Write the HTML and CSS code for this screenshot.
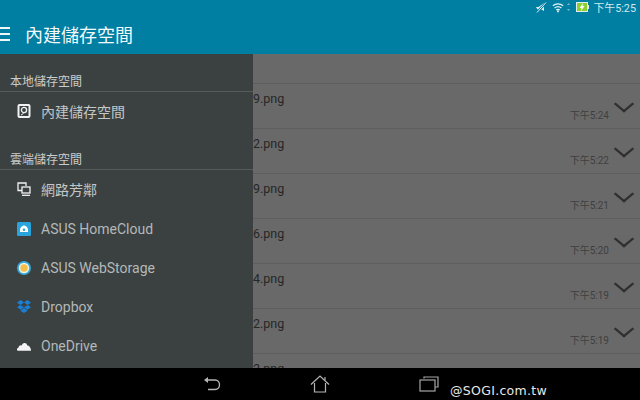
FILE: index.html
```html
<!DOCTYPE html>
<html lang="zh-Hant">
<head>
	<meta charset="UTF-8">
	<title>內建儲存空間</title>
	<link rel="stylesheet" href="styles.css">
</head>
<body>
	<div class="screen">
		<div class="status">
			<svg class="st_mute" width="11" height="11" viewBox="0 0 11 11"><path d="M0 5h2.500L8 1v8L5.500 7.500H1.500z" fill="#dfeef3"/><path d="M1 10.500L10 .5" stroke="#007fa3" stroke-width="2.400"/><path d="M1 10.500L10 .5" stroke="#dfeef3" stroke-width="1"/></svg>
			<svg class="st_wifi" width="12" height="11" viewBox="0 0 14 12" fill="none" stroke="#e8f3f6" stroke-width="1.400"><path d="M1 4c3.500-3 8.500-3 12 0M3 6.500c2.500-2 5.500-2 8 0M5 9c1.300-1 2.700-1 4 0"/><circle cx="7" cy="10.500" r="1.200" fill="#e8f3f6" stroke="none"/></svg>
			<svg class="st_arrows" width="3" height="10" viewBox="0 0 3 10"><path d="M0 3l1.500-2L3 3zM0 7l1.500 2L3 7z" fill="#7fb9cc"/></svg>
			<svg class="st_battery" width="13" height="10" viewBox="0 0 13 10"><rect width="12" height="10" fill="#dfeef3"/><rect x="1" y="1" width="10" height="8" fill="#8ccf2e"/><rect x="12" y="3" width="1" height="4" fill="#dfeef3"/><path d="M7 1L3.500 6h2L5 9l3.500-5h-2z" fill="#fff"/></svg>
			<span class="clock">下午5:25</span>
		</div>
		<div class="actionbar">
			<div class="burger"><i></i><i></i><i></i></div>
			<span class="title">內建儲存空間</span>
		</div>

		<div class="main">
			<div class="drawer">
				<div class="group_head first">本地儲存空間</div>
				<div class="row zh">
					<svg width="14" height="14" viewBox="0 0 14 14"><rect x="1.500" y="1" width="11" height="12" rx="1" fill="none" stroke="#f2f2f2" stroke-width="2"/><circle cx="7" cy="6" r="2.600" fill="none" stroke="#f2f2f2" stroke-width="1.300"/><path d="M4 11l2.500-1.500" stroke="#f2f2f2"/></svg>
					<span>內建儲存空間</span>
				</div>
				<div class="group_head">雲端儲存空間</div>
				<div class="row zh">
					<svg width="14" height="14" viewBox="0 0 14 14" fill="none" stroke="#f2f2f2" stroke-width="1.300"><path d="M5 8.500H1V1h8v3"/><rect x="5" y="5" width="8" height="6"/><path d="M5 13.300h8"/></svg>
					<span>網路芳鄰</span>
				</div>
				<div class="row">
					<svg width="14" height="14" viewBox="0 0 14 14"><rect width="14" height="14" rx="1.500" fill="#2aa5dc"/><path d="M3 10V7.500C3 6 5 3.500 7 3.500S11 6 11 7.500V10z" fill="#fff"/><circle cx="7" cy="7.800" r="1.300" fill="#2aa5dc"/></svg>
					<span>ASUS HomeCloud</span>
				</div>
				<div class="row">
					<svg width="14" height="14" viewBox="0 0 14 14"><circle cx="7" cy="7" r="7" fill="#37a9d8"/><circle cx="7" cy="7" r="5.200" fill="#eef4e6"/><circle cx="7" cy="7" r="3.700" fill="#f5bd4a"/></svg>
					<span>ASUS WebStorage</span>
				</div>
				<div class="row">
					<svg width="14" height="13" viewBox="0 0 14 13"><path d="M3.700 0L0 2.500l3.300 2.400L7 2.600zM10.300 0L7 2.600l3.700 2.300L14 2.500zM0 7.300l3.700 2.400L7 7.200 3.300 4.900zM10.700 4.900L7 7.200l3.300 2.500L14 7.300zM3.700 10.400L7 8l3.300 2.400v.6L7 13l-3.300-2z" fill="#1a7fd6"/></svg>
					<span>Dropbox</span>
				</div>
				<div class="row">
					<svg width="14" height="10" viewBox="0 0 15 10"><path d="M1 10C-.5 10-.5 7 1.500 6.800 2 4.500 4 4 5 4.500 6 1 10.500 1 11 4.500c2.500 0 4 3 4 5.500z" fill="#f4f4f4"/></svg>
					<span>OneDrive</span>
				</div>
			</div>

			<div class="files">
				<div class="file"><span class="name">9.png</span><span class="time">下午5:24</span></div>
				<div class="file"><span class="name">2.png</span><span class="time">下午5:22</span></div>
				<div class="file"><span class="name">9.png</span><span class="time">下午5:21</span></div>
				<div class="file"><span class="name">6.png</span><span class="time">下午5:20</span></div>
				<div class="file"><span class="name">4.png</span><span class="time">下午5:19</span></div>
				<div class="file"><span class="name">2.png</span><span class="time">下午5:19</span></div>
				<div class="file"><span class="name">2.png</span></div>
			</div>
		</div>

		<div class="navbar">
			<svg class="nav_back" width="18" height="16" viewBox="0 0 18 16" fill="none" stroke="#b5b5b5" stroke-width="1.300"><path d="M3 4h9c6 0 6 9.500 0 9.500H5"/><path d="M1 4l4-3v6z" fill="#b5b5b5" stroke="none"/></svg>
			<svg class="nav_home" width="20" height="18" viewBox="0 0 20 18" fill="none" stroke="#b5b5b5" stroke-width="1.200"><path d="M1 9.500L10 1l9 8.500"/><path d="M4.500 8v9h11V8"/><path d="M15 2v3"/></svg>
			<svg class="nav_recent" width="20" height="16" viewBox="0 0 20 16" fill="none" stroke="#a5a5a5" stroke-width="1.200"><path d="M5 2.500V1h14v10h-3"/><rect x="1" y="4" width="15" height="11"/></svg>
			<span class="watermark">@SOGI.com.tw</span>
		</div>
	</div>
</body>
</html>
```

FILE: styles.css
```css
*{margin: 0;padding: 0;box-sizing: border-box;}
html,body{width: 640px;height: 400px;overflow: hidden;}
body{font-family: Roboto,"Noto Sans CJK TC",sans-serif;background: #000;}
svg{display: block;flex: none;}
.screen{display: flex;flex-direction: column;width: 640px;height: 400px;}

.status{display: flex;align-items: center;justify-content: flex-end;height: 15px;padding: 0 4px 1px 0;background: #007fa3;color: #d5e8ef;font-size: 10.800px;}
.st_mute{margin-right: 5px;}
.st_wifi{margin-right: 3px;}
.st_arrows{margin-right: 6px;}
.st_battery{margin-right: 5px;}
.actionbar{display: flex;align-items: center;height: 39px;padding-bottom: 1px;background: #007fa3;}
.burger{display: flex;flex-direction: column;gap: 4px;width: 10px;margin-right: 16px;}
.burger i{display: block;height: 2px;background: #f0f7f9;}
.title{margin-left: -1px;color: #f2f9fb;font-size: 18px;}

.main{display: flex;height: 314px;overflow: hidden;}
.drawer{flex: none;width: 253px;background: #3b4141;}
.group_head{height: 22px;margin-top: 17px;padding: 4px 0 0 10px;border-bottom: 1px solid #565c5c;color: #c9cccc;font-size: 12px;line-height: 17px;}
.group_head.first{height: 38px;margin-top: 0;padding-top: 20px;}
.row{display: flex;align-items: center;height: 39px;padding-left: 17px;color: #b4b8b8;font-size: 14px;}
.row svg{margin-right: 10px;}
.row.zh{padding-bottom: 2px;color: #c4c7c7;}

.files{flex: 1;padding-top: 29px;background: #696969;}
.file{position: relative;height: 45px;border-top: 1px solid #5e5e5e;color: #262626;font-size: 12.500px;line-height: 30px;}
.name{display: block;}
.time{position: absolute;right: 31px;top: 25px;color: #3f3f3f;font-size: 10px;line-height: 14px;}
.file::after{content: "";position: absolute;right: 10px;top: 14px;width: 10px;height: 10px;border-right: 2px solid #2f2f2f;border-bottom: 2px solid #2f2f2f;transform: scaleX(1.200) rotate(45deg);}
.file:last-child::after{display: none;}

.navbar{display: flex;align-items: center;height: 32px;background: #000;}
.nav_back{margin-left: 203px;}
.nav_home{margin-left: 89px;}
.nav_recent{margin-left: 89px;}
.watermark{margin-left: 11px;padding-top: 12px;color: #e8e8e8;font-family: "DejaVu Sans",sans-serif;font-size: 12.500px;letter-spacing: .3px;}
```
